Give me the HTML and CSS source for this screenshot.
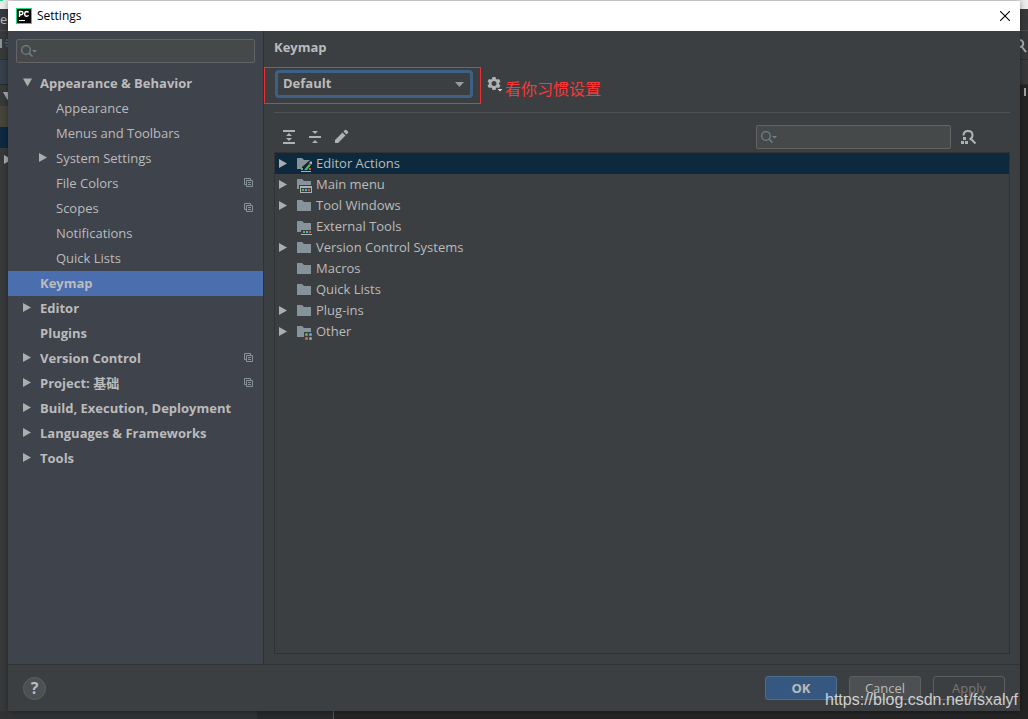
FILE: index.html
```
<!DOCTYPE html>
<html lang="en">
<head>
<meta charset="utf-8">
<title>Settings</title>
<link rel="stylesheet" href="styles.css">
</head>
<body>
<svg class="sprites" aria-hidden="true">
  <symbol id="right" viewBox="0 0 9 9"><path d="M0 0L8 4.500L0 9Z" fill="#adadad"/></symbol>
  <symbol id="down" viewBox="0 0 9 9"><path d="M0 0.500H9L4.500 8.500Z" fill="#adadad"/></symbol>
  <symbol id="copy" viewBox="0 0 9 9"><path d="M2 6.500H.5V.5H6.500V2M2.500 2.500H8.500V8.500H2.500ZM4 4.500H7M4 6.500H7" fill="none" stroke="#87939a"/></symbol>
  <symbol id="search" viewBox="0 0 16 12"><circle cx="5" cy="5" r="4.300" fill="none" stroke="#72808a" stroke-width="1.300"/><path d="M8 8L11.500 11.500" stroke="#72808a" stroke-width="1.500"/><path d="M11 5H16L13.500 7.500Z" fill="#72808a"/></symbol>
  <symbol id="folder" viewBox="0 0 16 16"><path d="M1 2H6L8 4H15V13H1Z" fill="#87939a"/></symbol>
</svg>

<div class="backdrop" aria-hidden="true">
  <div class="edge edge-left">
    <div class="strip-top"><i></i></div>
    <div class="strip-menu">e</div>
    <div class="strip-tools"><svg width="8" height="10"><path d="M0 0H2V9H0Z" fill="#87939a"/><path d="M6 1H8M5 4H8M6 7H8" stroke="#6c8299" fill="none"/></svg></div>
    <div class="strip-tab"></div>
    <div class="strip-node"><svg width="8" height="9"><path d="M3 0H12L7.500 8Z" fill="#adadad"/></svg></div>
    <div class="strip-olive"></div>
    <div class="strip-navy"></div>
    <div class="strip-node"><svg width="8" height="9"><path d="M4 0L12 4.500L4 9Z" fill="#adadad"/></svg></div>
  </div>
  <div class="edge edge-right">
    <div class="strip-top"></div>
    <div class="strip-menu"></div>
    <div class="strip-tools"><svg width="8" height="14"><path d="M0 1Q4 2 3 6Q2 8 0 8M2 8L6 13" stroke="#adadad" stroke-width="2" fill="none"/></svg></div>
    <div class="strip-tools"></div>
    <div class="strip-editor"><i></i></div>
  </div>
  <div class="edge-bottom"><i class="bottom-panel"></i><i class="bottom-gutter"></i><i class="bottom-editor"></i></div>
</div>

<div class="dialog" role="dialog" aria-labelledby="dialog-title">
  <header class="titlebar">
    <svg width="16" height="16" viewBox="0 0 16 16" aria-hidden="true"><path d="M0 0H16V16H0Z" fill="#21d789"/><path d="M1 1H15V15H1Z" fill="#080808"/><path d="M3.500 9V3.500H5.200Q7 3.500 7 5.100Q7 6.700 5.200 6.700H3.500M12.500 4.500Q11.700 3.500 10.700 3.500Q8.700 3.500 8.700 6Q8.700 8.300 10.700 8.300Q11.800 8.300 12.600 7.400" fill="none" stroke="#fff" stroke-width="1.400"/><path d="M3 12H9V13H3Z" fill="#fff"/></svg>
    <span id="dialog-title">Settings</span>
    <button class="close" type="button" aria-label="Close"><svg width="10" height="10"><path d="M0 0L10 10M10 0L0 10" stroke="#000" stroke-width="1.100"/></svg></button>
  </header>

  <div class="content">
    <aside class="sidebar">
      <label class="search"><svg width="16" height="12"><use href="#search"/></svg><input type="text" aria-label="Search settings"></label>
      <nav>
        <ul class="nav-list">
          <li><a class="group" href="#appearance-behavior"><svg class="arrow"><use href="#down"/></svg><span>Appearance &amp; Behavior</span></a></li>
          <li><a class="sub" href="#appearance"><span>Appearance</span></a></li>
          <li><a class="sub" href="#menus"><span>Menus and Toolbars</span></a></li>
          <li><a class="sub" href="#system"><svg class="arrow"><use href="#right"/></svg><span>System Settings</span></a></li>
          <li><a class="sub" href="#file-colors"><span>File Colors</span><svg class="copy"><use href="#copy"/></svg></a></li>
          <li><a class="sub" href="#scopes"><span>Scopes</span><svg class="copy"><use href="#copy"/></svg></a></li>
          <li><a class="sub" href="#notifications"><span>Notifications</span></a></li>
          <li><a class="sub" href="#quick-lists"><span>Quick Lists</span></a></li>
          <li><a class="group current" href="#keymap" aria-current="page"><span>Keymap</span></a></li>
          <li><a class="group" href="#editor"><svg class="arrow"><use href="#right"/></svg><span>Editor</span></a></li>
          <li><a class="group" href="#plugins"><span>Plugins</span></a></li>
          <li><a class="group" href="#version-control"><svg class="arrow"><use href="#right"/></svg><span>Version Control</span><svg class="copy"><use href="#copy"/></svg></a></li>
          <li><a class="group" href="#project"><svg class="arrow"><use href="#right"/></svg><span>Project: 基础</span><svg class="copy"><use href="#copy"/></svg></a></li>
          <li><a class="group" href="#build"><svg class="arrow"><use href="#right"/></svg><span>Build, Execution, Deployment</span></a></li>
          <li><a class="group" href="#languages"><svg class="arrow"><use href="#right"/></svg><span>Languages &amp; Frameworks</span></a></li>
          <li><a class="group" href="#tools"><svg class="arrow"><use href="#right"/></svg><span>Tools</span></a></li>
        </ul>
      </nav>
    </aside>

    <main class="main" id="keymap">
      <h1>Keymap</h1>
      <div class="scheme">
        <div class="combo">
          <select aria-label="Keymap scheme"><option>Default</option></select>
          <svg class="combo-arrow" width="9" height="5"><path d="M0 0H9L4.500 5Z" fill="#9a9da0"/></svg>
          <div class="highlight"></div>
        </div>
        <button class="icon-button" type="button" aria-label="Scheme options"><svg width="16" height="16" viewBox="0 0 16 16"><path fill="#afb1b3" fill-rule="evenodd" d="M5.500 1H8.500L9 2.900L10.200 3.600L12 3L13.500 5.500L12.100 6.800V8.200L13.500 9.500L12 12L10.200 11.400L9 12.100L8.500 14H5.500L5 12.100L3.800 11.400L2 12L.5 9.500L1.900 8.200V6.800L.5 5.500L2 3L3.800 3.600L5 2.900ZM7 5A2.500 2.500 0 1 0 7 10A2.500 2.500 0 1 0 7 5Z"/><path d="M9 12H16L12.500 16Z" fill="#3c3f41"/><path d="M10.500 13H15.500L13 15.500Z" fill="#d0d2d4"/></svg></button>
        <span class="note" lang="zh">看你习惯设置</span>
      </div>
      <hr>
      <div class="toolbar">
        <button class="icon-button" type="button" aria-label="Expand all"><svg width="16" height="16"><path d="M2 1H14V3H2ZM2 13H14V15H2ZM8 4L11 7H5ZM5 9H11L8 12Z" fill="#afb1b3"/></svg></button>
        <button class="icon-button" type="button" aria-label="Collapse all"><svg width="16" height="16"><path d="M2 7H14V9H2ZM5 2H11L8 5ZM8 11L11 14H5Z" fill="#afb1b3"/></svg></button>
        <button class="icon-button" type="button" aria-label="Edit shortcut"><svg width="16" height="16"><path d="M2 11L9.500 3.500L12.500 6.500L5 14H2ZM10.500 2.500L12 1Q13 .5 14 1.500L15 2.500Q15.500 3.300 15 4L13.500 5.500Z" fill="#afb1b3"/></svg></button>
        <label class="search action-search"><svg width="16" height="12"><use href="#search"/></svg><input type="text" aria-label="Search actions"></label>
        <button class="icon-button" type="button" aria-label="Find actions by shortcut"><svg width="16" height="16"><path d="M2.500 6.500Q2.500 2 7 2Q11.500 2 11.500 6.300Q11.500 9.500 8.500 10.500M10 10L14.500 14.500" fill="none" stroke="#afb1b3" stroke-width="2"/><path d="M2 8H5V11H2ZM0 12H3V15H0ZM4 12H7V15H4Z" fill="#afb1b3"/></svg></button>
      </div>
      <ul class="tree" role="tree" aria-label="Actions">
        <li role="treeitem" class="selected"><svg class="arrow"><use href="#right"/></svg><svg class="folder" viewBox="0 0 16 16"><path d="M1 2H6L8 4H14L6 11V13H1Z" fill="#87939a"/><path d="M8 14L13 8L15 9L11 14Z" fill="#62b543"/><path d="M13 7L15 5L16 6V8L15 8.500Z" fill="#a8b2b8"/><path d="M5 12H7V14H5Z" fill="#62b543"/><path d="M13 12H15V14H13Z" fill="#d9532c"/><path d="M5 15H15V16H5Z" fill="#a8b2b8"/></svg><span>Editor Actions</span></li>
        <li role="treeitem"><svg class="arrow"><use href="#right"/></svg><svg class="folder" viewBox="0 0 16 16"><path d="M1 2H6L8 4H15V8H3V12H1Z" fill="#87939a"/><path d="M4 9H16V16H4ZM5 11V15H15V11Z" fill="#a8b2b8" fill-rule="evenodd"/><path d="M6 12H8V14H6Z" fill="#62b543"/><path d="M9 12H11V14H9Z" fill="#40b6e0"/><path d="M12 12H14V14H12Z" fill="#d9532c"/></svg><span>Main menu</span></li>
        <li role="treeitem"><svg class="arrow"><use href="#right"/></svg><svg class="folder"><use href="#folder"/></svg><span>Tool Windows</span></li>
        <li role="treeitem"><svg class="arrow"></svg><svg class="folder" viewBox="0 0 16 16"><path d="M1 2H6L8 4H15V11H5V13H1Z" fill="#87939a"/><path d="M7 12H9V14H7Z" fill="#62b543"/><path d="M10 12H12V14H10Z" fill="#40b6e0"/><path d="M13 12H15V14H13Z" fill="#d9532c"/><path d="M5 15H16V16H5Z" fill="#a8b2b8"/></svg><span>External Tools</span></li>
        <li role="treeitem"><svg class="arrow"><use href="#right"/></svg><svg class="folder"><use href="#folder"/></svg><span>Version Control Systems</span></li>
        <li role="treeitem"><svg class="arrow"></svg><svg class="folder"><use href="#folder"/></svg><span>Macros</span></li>
        <li role="treeitem"><svg class="arrow"></svg><svg class="folder"><use href="#folder"/></svg><span>Quick Lists</span></li>
        <li role="treeitem"><svg class="arrow"><use href="#right"/></svg><svg class="folder"><use href="#folder"/></svg><span>Plug-ins</span></li>
        <li role="treeitem"><svg class="arrow"><use href="#right"/></svg><svg class="folder" viewBox="0 0 16 16"><path d="M1 2H6L8 4H15V8H8V13H1Z" fill="#87939a"/><circle cx="10.500" cy="10.500" r="1.500" fill="#62b543"/><circle cx="14.500" cy="10.500" r="1.500" fill="#40b6e0"/><circle cx="10.500" cy="14.500" r="1.500" fill="#f26522"/><circle cx="14.500" cy="14.500" r="1.500" fill="#9aa7b0"/></svg><span>Other</span></li>
      </ul>
    </main>
  </div>

  <footer class="footer">
    <button class="help" type="button" aria-label="Help">?</button>
    <button class="button primary" type="button">OK</button>
    <button class="button" type="button">Cancel</button>
    <button class="button" type="button" disabled>Apply</button>
  </footer>
</div>
<div class="watermark">https://blog.csdn.net/fsxalyf</div>
</body>
</html>
```
FILE: styles.css
```
* { box-sizing: border-box; }
body {
  margin: 0;
  min-height: 100vh;
  padding: 1px 8px 8px;
  display: flex;
  position: relative;
  background: #2b2b2b;
  color: #bbbbbb;
  font: 13px/20px "Open Sans", "Noto Sans CJK SC", sans-serif;
}
svg { display: block; flex: none; }
button, input, select { font: inherit; color: inherit; }
ul { list-style: none; margin: 0; padding: 0; }
.sprites { position: absolute; width: 0; height: 0; }

.backdrop { position: absolute; inset: 0; overflow: hidden; background: #ececec; }
.edge { position: absolute; top: 0; bottom: 0; width: 8px; background: #37393b; overflow: hidden; }
.edge-left { left: 0; }
.edge-right { right: 0; background: #242424; }
.strip-top { height: 9px; background: #ececec; }
.strip-top i { display: block; width: 3px; height: 1px; background: #21d789; }
.strip-menu { height: 22px; background: #37393b; border-bottom: 1px solid #4a4c4e; line-height: 21px; }
.strip-tools { height: 29px; background: #37393b; border-bottom: 1px solid #2c2e2f; padding-top: 8px; }
.edge-right .strip-tools + .strip-tools { height: 25px; }
.strip-tab { height: 25px; background: #35404c; border-bottom: 1px solid #292b2c; }
.strip-node { height: 21px; padding-top: 7px; }
.strip-olive { height: 21px; background: #47443a; }
.strip-navy { height: 21px; background: #0c2940; }
.strip-editor { padding: 3px 0 0 4px; }
.strip-editor i { display: block; width: 2px; height: 8px; background: #a0a0a0; }
.edge-bottom { position: absolute; left: 0; right: 0; bottom: 0; height: 8px; display: flex; }
.bottom-panel { width: 25%; background: #303234; }
.bottom-gutter { width: 77px; background: #28292a; border-right: 1px solid #555555; }
.bottom-editor { flex: 1; background: #242424; }

.dialog {
  position: relative;
  flex: 1;
  min-width: 0;
  display: flex;
  flex-direction: column;
  background: #3c3f41;
  box-shadow: 0 0 6px rgba(0, 0, 0, 0.4);
}
.titlebar {
  height: 30px;
  padding: 0 10px 0 8px;
  display: flex;
  align-items: center;
  gap: 5px;
  background: #ffffff;
  color: #000000;
  font-size: 12px;
}
.close { margin-left: auto; padding: 0; border: 0; background: none; }
.content { flex: 1; display: flex; }

.sidebar {
  width: 256px;
  flex: none;
  padding-top: 8px;
  background: #3f434c;
  border-right: 1px solid #323232;
}
.search {
  height: 24px;
  display: flex;
  align-items: center;
  gap: 4px;
  padding: 0 4px;
  background: #45494a;
  border: 1px solid #646464;
  border-radius: 2px;
}
.search input { flex: 1; min-width: 0; padding: 0; border: 0; outline: 0; background: none; }
.sidebar .search { margin: 0 8px 8px; }
.nav-list a {
  height: 25px;
  display: flex;
  align-items: center;
  padding: 0 10px 2px 0;
  color: inherit;
  text-decoration: none;
}
.nav-list a.group { font-weight: 700; padding-left: 32px; }
.nav-list a.sub { padding-left: 48px; }
.nav-list .current { background: #4b6eaf; }
.arrow { width: 9px; height: 9px; }
.nav-list .arrow { margin-left: -17px; margin-right: 8px; }
.copy { width: 9px; height: 9px; margin-left: auto; }

.main { flex: 1; min-width: 0; padding: 0 10px; display: flex; flex-direction: column; }
h1 { margin: 0 0 7px; font-size: 13px; line-height: 32px; }
.scheme { display: flex; align-items: center; }
.combo { position: relative; width: 200px; padding: 0 1px; margin-right: 13px; }
.combo select {
  display: block;
  width: 100%;
  height: 28px;
  padding: 0 7px 2px 5px;
  appearance: none;
  font-weight: 700;
  line-height: 20px;
  background: #3c3f41;
  border: 3px solid #3d6185;
  border-radius: 4px;
  outline: 0;
}
.combo-arrow { position: absolute; right: 10px; top: 12px; pointer-events: none; }
.highlight { position: absolute; inset: -3px -7px -6px -10px; border: 1px solid #f03030; pointer-events: none; }
.icon-button { padding: 0; border: 0; background: none; }
.note { margin: 8px 0 0 2px; height: 20px; color: #fb3838; font: 16px/20px "Noto Sans CJK SC", sans-serif; }
hr { width: 100%; height: 1px; margin: 14px 0 0; border: 0; background: #515151; }
.toolbar { display: flex; align-items: center; gap: 10px; padding: 12px 33px 3px 7px; }
.action-search { width: 195px; margin-left: auto; }
.tree { flex: 1; margin-bottom: 10px; border: 1px solid #323232; }
.tree li { height: 21px; display: flex; align-items: center; padding-left: 4px; }
.tree span { padding-bottom: 2px; }
.tree .selected { background: #0d293e; }
.folder { width: 16px; height: 16px; margin: 0 4px 0 8px; }

.footer {
  display: flex;
  align-items: center;
  gap: 12px;
  padding: 11px 15px;
  border-top: 1px solid #323232;
}
.help {
  width: 23px;
  height: 23px;
  padding: 0;
  margin-right: auto;
  border: 1px solid #5e6060;
  border-radius: 50%;
  background: #4c5052;
  font-size: 16px;
  font-weight: 700;
  line-height: 20px;
}
.button {
  width: 72px;
  height: 24px;
  padding: 0;
  border: 1px solid #5e6060;
  border-radius: 3px;
  background: #4c5052;
  line-height: 20px;
}
.primary { background: #365880; border-color: #4c708c; font-weight: 700; }
.button:disabled { background: #3c3f41; color: #777777; }
.watermark {
  position: absolute;
  right: 10px;
  bottom: 9px;
  color: rgba(255, 255, 255, 0.75);
  font: 16px/20px "Liberation Sans", Arial, sans-serif;
  pointer-events: none;
}
```
